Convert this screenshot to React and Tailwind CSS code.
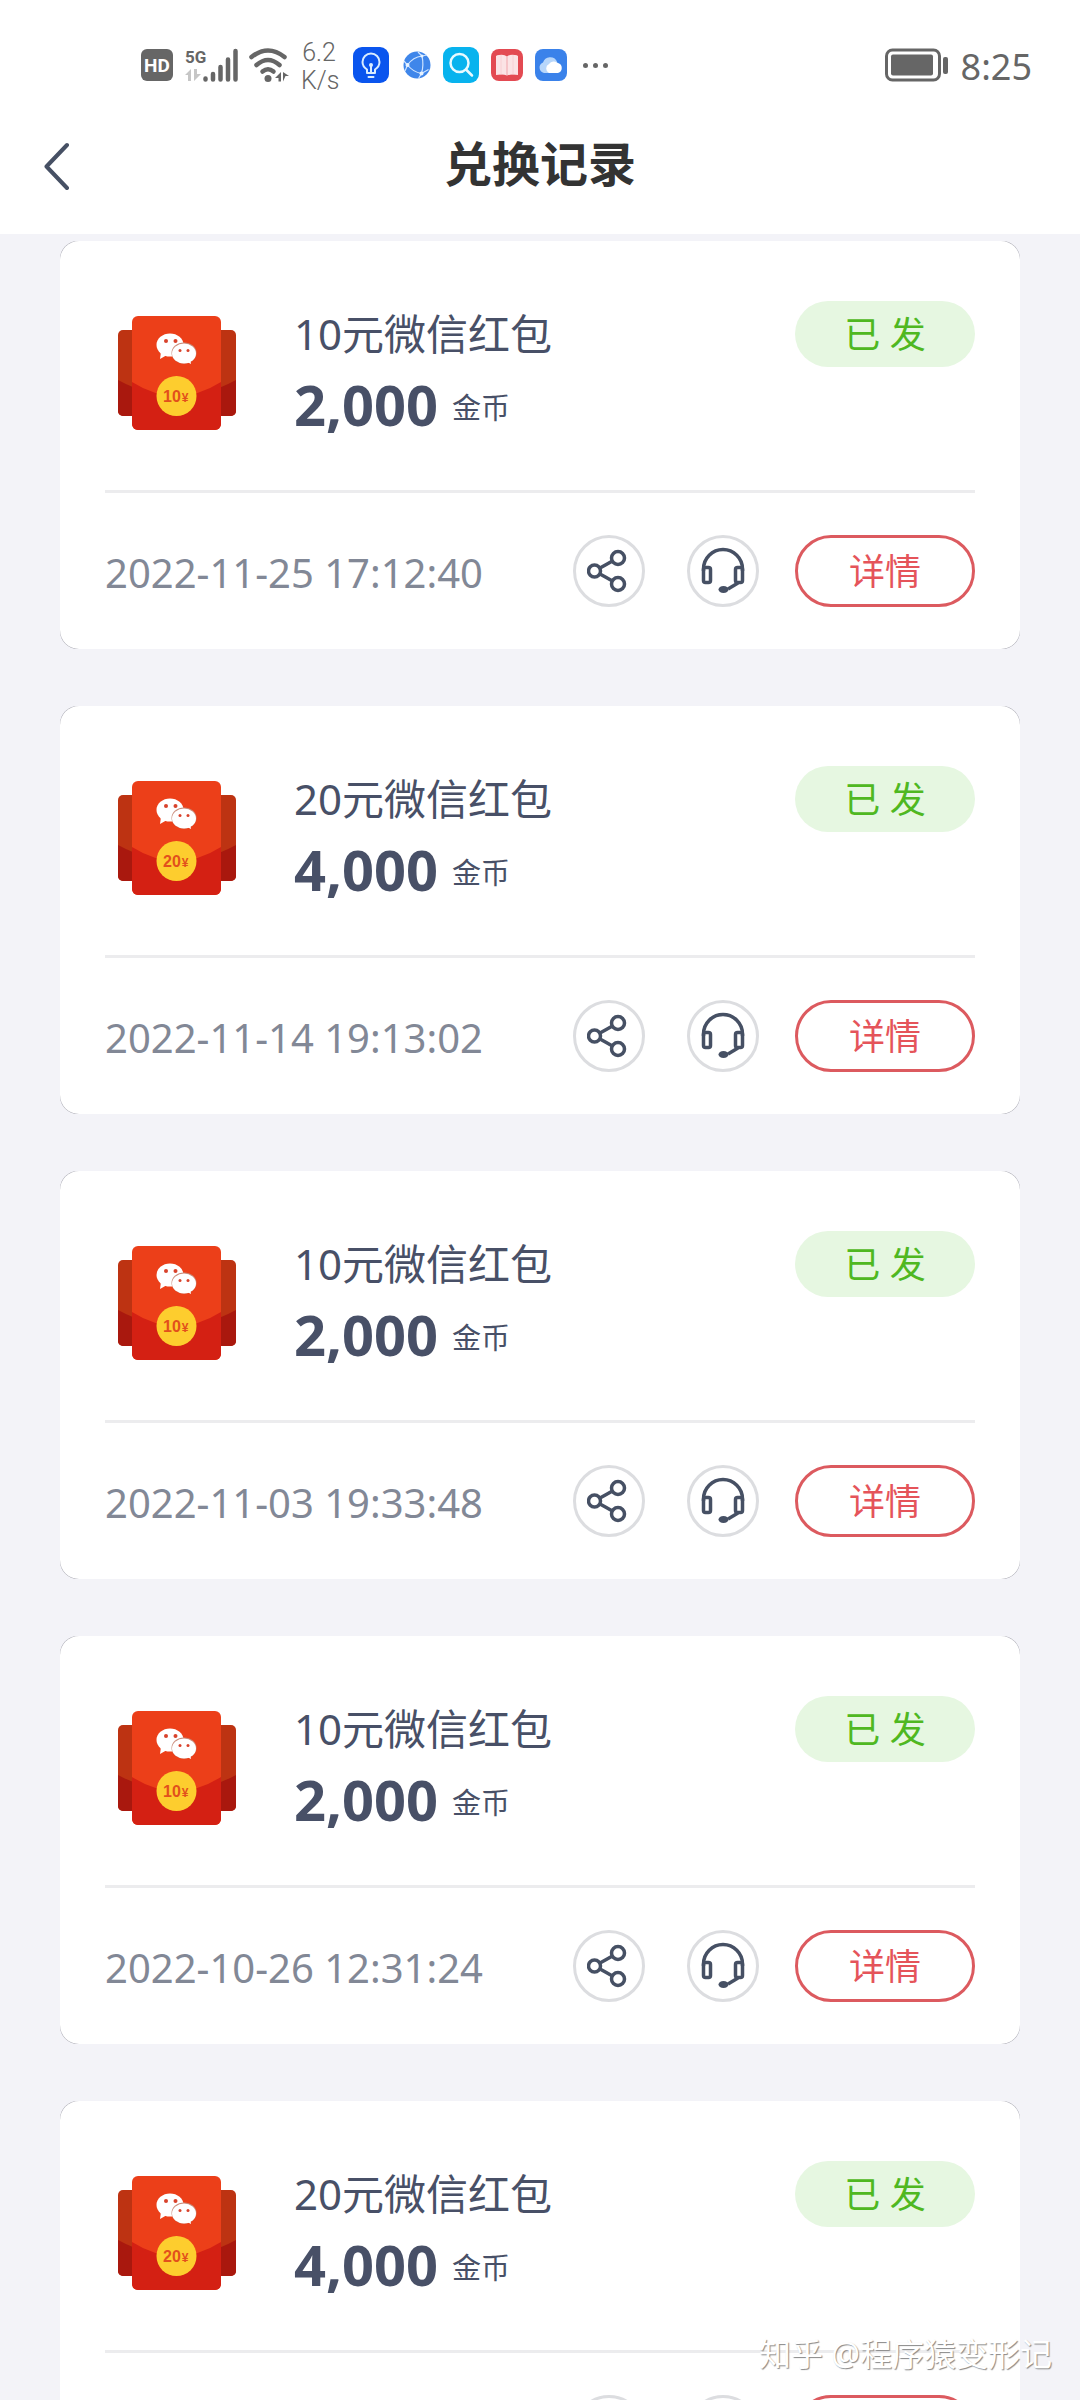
const records = [
  { amount: 10, coins: "2,000", time: "2022-11-25 17:12:40" },
  { amount: 20, coins: "4,000", time: "2022-11-14 19:13:02" },
  { amount: 10, coins: "2,000", time: "2022-11-03 19:33:48" },
  { amount: 10, coins: "2,000", time: "2022-10-26 12:31:24" },
  { amount: 20, coins: "4,000", time: "2022-10-18 20:05:16" },
];

function HdIcon() {
  return (
    <span className="flex h-8 w-8 items-center justify-center rounded-[6px] bg-[#666] font-['Roboto',sans-serif] text-[19px] font-bold leading-none text-white">
      HD
    </span>
  );
}

function SignalIcon() {
  return (
    <svg className="h-9 w-14" viewBox="0 0 56 36" aria-hidden="true">
      <text x="0" y="16" fontFamily="Roboto, sans-serif" fontWeight="700" fontSize="17" fill="#666">
        5G
      </text>
      <g fill="#c6c6c6">
        <path d="M0 28l6-6v12H3v-6z" />
        <path d="M9 22h3v5h4l-7 7z" />
      </g>
      <path
        d="M20.500 31.500v1M28 27v5.500M35.500 20v12.500M43 12.500v20M50.500 4v28.500"
        stroke="#666"
        strokeWidth="4.500"
        strokeLinecap="round"
      />
    </svg>
  );
}

function WifiIcon() {
  return (
    <svg className="h-9 w-10" viewBox="0 0 40 36" aria-hidden="true">
      <g fill="none" stroke="#666" strokeWidth="4.500" strokeLinecap="round">
        <path d="M2.500 10Q19 -3 35.500 10" />
        <path d="M7.500 18Q19 8 30.500 18" />
        <path d="M13.500 24.500Q19 20 24.500 24.500" />
      </g>
      <circle cx="19" cy="31.500" r="3.500" fill="#666" />
      <path d="M26 31l6-6v9.500h-2.500V31zM34 25l6 4h-3.500l-2.500 5.500z" fill="#666" />
    </svg>
  );
}

function BulbIcon() {
  return (
    <svg className="h-9 w-9" viewBox="0 0 36 36" aria-hidden="true">
      <rect width="36" height="36" rx="9" fill="#0a55ee" />
      <g fill="none" stroke="#d8ecff" strokeWidth="2" strokeLinecap="round" strokeLinejoin="round">
        <path d="M14 26v-3.500c-3-2-4.500-4-4.500-7.500a8.500 8.500 0 0 1 17 0c0 3.500-1.500 5.500-4.500 7.500V26z" />
        <path d="M18 18v8M15.500 30h5" />
      </g>
      <circle cx="18" cy="18" r="2" fill="#d8ecff" />
    </svg>
  );
}

function GlobeIcon() {
  return (
    <svg className="h-7 w-7" viewBox="0 0 28 28" aria-hidden="true">
      <circle cx="14" cy="14" r="13.500" fill="#3f86ea" />
      <g fill="none" stroke="#cfe4ff" strokeWidth="1.200">
        <path d="M4.500 14Q10 6 19 5Q21 14 18.500 22.500Q10 21 4.500 14Z" />
        <path d="M1 10l3.500 4L2 20M19 5l-4-4M19 5l5-1M18.500 22.500l7-4M18.500 22.500l-3 5" />
      </g>
      <g fill="#e8f3ff">
        <circle cx="4.500" cy="14" r="2" />
        <circle cx="19" cy="5" r="1.500" />
        <circle cx="18.500" cy="22.500" r="2" />
      </g>
    </svg>
  );
}

function SearchAppIcon() {
  return (
    <svg className="h-9 w-9" viewBox="0 0 36 36" aria-hidden="true">
      <rect width="36" height="36" rx="9" fill="#08b3ee" />
      <circle cx="16.500" cy="16" r="9" fill="none" stroke="#e8faff" strokeWidth="2.500" />
      <path d="M23 22.500l6 6" stroke="#e8faff" strokeWidth="2.500" strokeLinecap="round" />
    </svg>
  );
}

function BookIcon() {
  return (
    <svg className="h-8 w-8" viewBox="0 0 32 32" aria-hidden="true">
      <rect width="32" height="32" rx="8" fill="#e34a52" />
      <path d="M5 7q1-1 3-1 5-1 8 1.500Q19 5 24 6q2 0 3 1v19q-7-1-11 0.500Q12 25 5 26z" fill="#fbe3e5" />
      <path d="M16 7.500V26" stroke="#f0a5ab" strokeWidth="1" />
      <path d="M10 6v19.500M22 6v19.500" stroke="#f8d0d4" strokeWidth="1" />
    </svg>
  );
}

function CloudIcon() {
  return (
    <svg className="h-8 w-8" viewBox="0 0 32 32" aria-hidden="true">
      <rect width="32" height="32" rx="8" fill="#3a82ea" />
      <path d="M9 24a5.500 5.500 0 0 1-1-10.500 7.500 7.500 0 0 1 14-1L16 24z" fill="#b7d6fa" />
      <path d="M14 24a5 5 0 0 1 0-9 6 6 0 0 1 9-1 5.200 5.200 0 0 1 0 10z" fill="#fff" />
    </svg>
  );
}

function BatteryIcon() {
  return (
    <svg className="h-[34px] w-16" viewBox="0 0 64 34" role="img" aria-label="电量">
      <rect x="1.500" y="2" width="53" height="30" rx="6" fill="none" stroke="#666" strokeWidth="3" />
      <rect x="6" y="6.500" width="42" height="21" rx="2" fill="#666" />
      <rect x="58" y="9" width="5" height="17" rx="2" fill="#666" />
    </svg>
  );
}

function StatusBar() {
  return (
    <div className="flex h-[130px] items-center justify-between pl-[141px] pr-12 text-[#666]">
      <div className="flex items-center">
        <HdIcon />
        <div className="ml-3">
          <SignalIcon />
        </div>
        <div className="ml-2">
          <WifiIcon />
        </div>
        <div className="ml-3 w-9 pt-1 text-center font-['Roboto',sans-serif] text-[25px] font-light leading-[28px]">
          6.2
          <br />
          K/s
        </div>
        <div className="ml-4 flex items-center">
          <BulbIcon />
          <div className="ml-[14px] mr-3">
            <GlobeIcon />
          </div>
          <SearchAppIcon />
          <div className="mx-3">
            <BookIcon />
          </div>
          <CloudIcon />
        </div>
        <div className="ml-4 flex gap-[5px]">
          <span className="h-[5px] w-[5px] rounded-full bg-[#666]" />
          <span className="h-[5px] w-[5px] rounded-full bg-[#666]" />
          <span className="h-[5px] w-[5px] rounded-full bg-[#666]" />
        </div>
      </div>
      <div className="flex items-center gap-3">
        <BatteryIcon />
        <span className="pt-1 text-[36px] leading-none">8:25</span>
      </div>
    </div>
  );
}

function EnvelopeIcon({ amount }) {
  return (
    <svg className="h-[114px] w-[118px]" viewBox="0 0 118 114" aria-hidden="true">
      <rect x="0" y="14" width="118" height="86" rx="5" fill="#bd3312" />
      <path d="M0 64Q59 96 118 64V95a5 5 0 0 1-5 5H5a5 5 0 0 1-5-5z" fill="#a9180e" />
      <rect x="14" y="0" width="89" height="114" rx="6" fill="#ec3f19" />
      <path d="M14 66Q58.500 94 103 66V108a6 6 0 0 1-6 6H20a6 6 0 0 1-6-6z" fill="#d42013" />
      <path d="M43 36l-1 7 7-4z" fill="#fff" />
      <ellipse cx="52" cy="29" rx="13.500" ry="11.500" fill="#fff" />
      <ellipse cx="66" cy="37" rx="12.500" ry="10.500" fill="#c98a78" />
      <path d="M67 45l6 3-1-6z" fill="#fff" />
      <ellipse cx="66" cy="37.500" rx="12" ry="10" fill="#fff" />
      <g fill="#d9422b">
        <circle cx="48" cy="25" r="2" />
        <circle cx="57.500" cy="25" r="2" />
        <circle cx="62" cy="34.500" r="1.500" />
        <circle cx="70" cy="34.500" r="1.500" />
      </g>
      <circle cx="58.500" cy="80" r="20" fill="#fdcd2e" />
      <text x="45" y="86" fontFamily="'Liberation Sans', sans-serif" fontWeight="700" fontSize="16" fill="#e2501c">
        {amount}
        <tspan dx="1" fontSize="12">
          ¥
        </tspan>
      </text>
    </svg>
  );
}

function ShareIcon() {
  return (
    <svg className="h-11 w-11" viewBox="0 0 44 44" fill="none" stroke="#465064" strokeWidth="3.500" aria-hidden="true">
      <circle cx="7.500" cy="22" r="6" />
      <circle cx="31" cy="9" r="6.500" />
      <circle cx="31" cy="35" r="6.500" />
      <path d="M13 19l12.500-7M13 25l12.500 7" />
    </svg>
  );
}

function HeadsetIcon() {
  return (
    <svg className="h-12 w-11" viewBox="0 0 44 48" fill="none" stroke="#465064" strokeWidth="3.500" aria-hidden="true">
      <path d="M2.500 24v-2a19.500 19.500 0 0 1 39 0v2" />
      <rect x="2.500" y="20.500" width="7" height="15" rx="2" />
      <rect x="34.500" y="20.500" width="7" height="15" rx="2" />
      <path d="M37 36l-10 6" />
      <ellipse cx="22.500" cy="42.500" rx="5" ry="3.500" fill="#465064" stroke="none" />
    </svg>
  );
}

function RecordCard({ record }) {
  return (
    <li className="rounded-[18px] bg-[#a0a0aa]">
      <article className="rounded-[19px] bg-white px-[45px]">
        <div className="flex h-[252px] items-start border-b-[3px] border-[#ececee]">
          <div className="ml-[13px] mt-[75px]">
            <EnvelopeIcon amount={record.amount} />
          </div>
          <div className="ml-[58px] mt-[60px] flex-1 text-[#485067]">
            <h2 className="text-[42px] leading-[66px]">{record.amount}元微信红包</h2>
            <p className="flex items-center">
              <span className="text-[56px] font-bold leading-[74px]">{record.coins}</span>
              <span className="ml-[14px] mt-2 text-[29px] leading-[40px]">金币</span>
            </p>
          </div>
          <span className="mt-[60px] w-[180px] rounded-full bg-[#e6f7e1] pt-[2px] text-center text-[36px] leading-[64px] text-[#4fb821]">
            已 发
          </span>
        </div>
        <div className="flex h-[156px] items-center">
          <time className="flex-1 pt-1 text-[40px] leading-none text-[#828896]">{record.time}</time>
          <button
            type="button"
            aria-label="分享"
            className="flex h-[72px] w-[72px] items-center justify-center rounded-full border-[3px] border-[#dcdde0]"
          >
            <ShareIcon />
          </button>
          <button
            type="button"
            aria-label="客服"
            className="ml-[42px] flex h-[72px] w-[72px] items-center justify-center rounded-full border-[3px] border-[#dcdde0]"
          >
            <HeadsetIcon />
          </button>
          <button
            type="button"
            className="ml-9 h-[72px] w-[180px] rounded-full border-[3px] border-[#dc5a5f] pt-[2px] text-[36px] leading-none text-[#e5545a]"
          >
            详情
          </button>
        </div>
      </article>
    </li>
  );
}

export default function App() {
  return (
    <div className="relative flex h-screen flex-col overflow-hidden bg-[#f3f3f8] font-['Noto_Sans','Noto_Sans_CJK_SC',sans-serif]">
      <header className="shrink-0 bg-white">
        <StatusBar />
        <div className="grid h-[104px] grid-cols-[1fr_auto_1fr] items-start">
          <button type="button" aria-label="返回" className="ml-[42px] mt-3 w-8">
            <svg className="h-12 w-8" viewBox="0 0 32 48" fill="none" stroke="#465064" strokeWidth="4" strokeLinecap="round" strokeLinejoin="round" aria-hidden="true">
              <path d="M25 3L4.500 24.500 25 46" />
            </svg>
          </button>
          <h1 className="text-[48px] font-bold leading-[68px] text-[#333]">兑换记录</h1>
        </div>
      </header>
      <main className="flex-1 overflow-y-auto px-[60px] pt-[7px] [scrollbar-width:none]">
        <ul className="flex flex-col gap-[57px]">
          {records.map((record) => (
            <RecordCard key={record.time} record={record} />
          ))}
        </ul>
      </main>
      <p className="absolute bottom-[26px] right-7 text-[32px] leading-[40px] text-white [text-shadow:1px_1px_1px_#888]">
        知乎 @程序猿变形记
      </p>
    </div>
  );
}
